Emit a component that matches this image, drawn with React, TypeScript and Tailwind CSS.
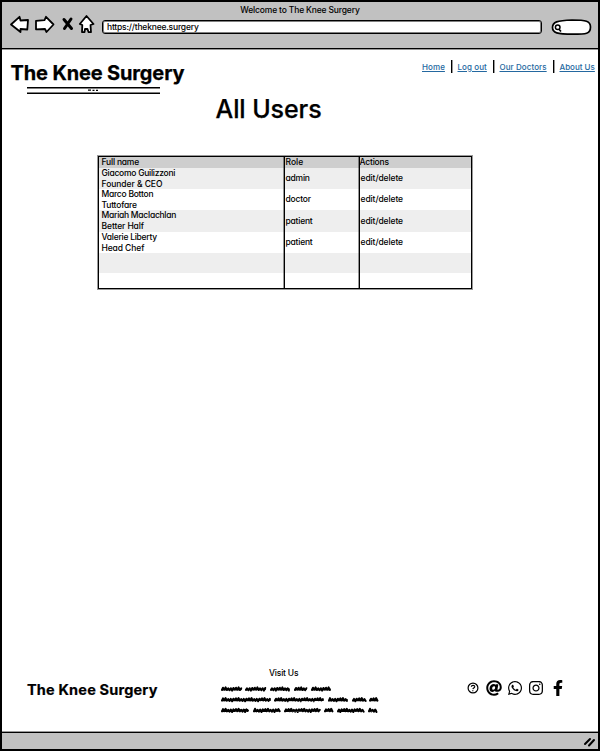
import type { ReactNode } from "react";
import { FaAt, FaFacebookF, FaInstagram, FaWhatsapp } from "react-icons/fa";

const users = [
  { name: "Giacomo Guilizzoni", title: "Founder & CEO", role: "admin", titleClass: "tracking-[-0.05px]" },
  { name: "Marco Botton", title: "Tuttofare", role: "doctor", titleClass: "tracking-[-0.2px]" },
  { name: "Mariah Maclachlan", title: "Better Half", role: "patient", titleClass: "tracking-[-0.1px]" },
  { name: "Valerie Liberty", title: "Head Chef", role: "patient", titleClass: "tracking-[-0.1px]" },
];

// Start and end of each scribbled word, per line.
const scribbles = [
  [[0, 21], [24, 45], [49, 69], [73, 86], [90, 110]],
  [[0, 50], [53, 103], [107, 127], [131, 145], [148, 157]],
  [[0, 28], [32, 59], [63, 99], [103, 112], [116, 143], [147, 156]],
];

function scribblePath(from: number, to: number, y: number) {
  let d = `M${from + 1} ${y + 1}`;
  for (let x = from + 2, i = 0; x < to; x += 1.3, i++) {
    const reach = [1.3, 0.8, 1.6, 1, 0.6][(i + from) % 5];
    d += `L${x} ${y + (i % 2 ? reach : -reach)}`;
  }
  return d + `M${from + 1} ${y + 0.5}L${to - 1} ${y + 0.2}`;
}

const colLine = "border-r border-black shadow-[inset_-1px_0_0_rgba(0,0,0,0.4)]";

function Cell({ children, className = "" }: { children?: ReactNode; className?: string }) {
  return <div className={`flex flex-col justify-center ${className}`}>{children}</div>;
}

function Separator({ className = "" }: { className?: string }) {
  return <i className={`h-full w-px bg-black shadow-[1px_0_0_rgba(0,0,0,0.4)] ${className}`} />;
}

export default function App() {
  return (
    <div className="flex h-[751px] w-[600px] flex-col overflow-hidden border-2 border-black bg-white font-['Inter','Liberation_Sans',sans-serif] text-[8.5px] font-medium leading-[11px] tracking-[-0.2px] text-black [font-feature-settings:'cv11']">
      <header className="flex h-[47px] shrink-0 flex-col border-b border-black bg-[#c1c1c1] shadow-[0_1px_0_rgba(0,0,0,0.4)]">
        <div className="mt-[3px] text-center tracking-[-0.16px]">Welcome to The Knee Surgery</div>
        <div className="-mt-px flex items-start">
          <svg className="h-[22px] w-[94px]" viewBox="2 15 94 22" fill="#fff" stroke="#000" strokeWidth="1.8" strokeLinejoin="round">
            <path d="M11 24.5 19.5 16.8 20.5 20.5 28 20 27.3 29.5 20.5 29 20.5 32Z" />
            <path d="M36 20.8 44.5 20.2 46 16.800 53.5 24.5 46.5 32 45 29 36 29.3Z" />
            <path d="M64 19.500 71.500 28.500M71 19 64.500 28.500" strokeWidth="3" strokeLinecap="round" />
            <path d="M86.5 16 93.5 24 90.5 25 91 32.2 88.5 32 87.5 29 85 29 84.5 32 82 32.2 82.3 25 79.8 24Z" />
          </svg>
          <div className="mt-[5px] ml-[6px] flex h-[14px] w-[440px] items-center rounded-[3px] border border-black bg-white pt-px pl-[4px] shadow-[inset_0_0_0_1px_rgba(0,0,0,0.5)]">
            https://theknee.surgery
          </div>
          <svg className="mt-[3px] ml-[9px] h-[18px] w-[42px]" viewBox="551 18 42 18" fill="#fff" stroke="#000" strokeWidth="1.7">
            <path d="M552.500 27.500C552.500 22 557 20.500 572 20C586 20 590.500 21 590.500 27C590.500 34 586 34.200 573 34.200C557 34 552.500 33 552.500 27.500Z" />
            <circle cx="557.700" cy="27.300" r="2.300" strokeWidth="1.500" />
            <path d="M559 29.200 561 31.500" />
          </svg>
        </div>
      </header>

      <div className="flex shrink-0 justify-between">
        <div className="mt-[14px] ml-[8.500px]">
          <h1 className="whitespace-nowrap text-[20px] font-bold leading-[20px] tracking-[-0.14px] [-webkit-text-stroke:0.25px_black]">The Knee Surgery</h1>
          <svg className="mt-[4px] ml-[16.500px] block h-[8px] w-[134px]" viewBox="0 0 134 8" stroke="#000">
            <path d="M0 .8H133M0 6.300H133" strokeWidth="1.400" />
            <path d="M61 3.200h3M65.500 3.400h2M69 3.400h2" strokeWidth="1.300" />
          </svg>
        </div>
        <nav className="mt-[11px] mr-[2px] flex h-[13px] items-center whitespace-nowrap text-[8px] tracking-[0.08px] text-[#2468a0]">
          <a className="w-[29px] pt-[2px] underline">Home</a>
          <Separator />
          <a className="w-[36px] pt-[2px] pl-[5.500px] underline">Log out</a>
          <Separator className="ml-[5px]" />
          <a className="w-[54px] pt-[2px] pl-[5.500px] underline">Our Doctors</a>
          <Separator className="ml-[5px]" />
          <a className="w-[42px] pt-[2px] pl-[5.500px] tracking-normal underline">About Us</a>
        </nav>
      </div>

      <h2 className="mt-[2px] ml-[213.500px] shrink-0 whitespace-nowrap text-[25px] leading-[25px] tracking-[-0.08px] [-webkit-text-stroke:0.25px_black]">All Users</h2>

      <div className="mt-[34px] ml-[95.500px] grid h-[133px] w-[374px] shrink-0 grid-cols-[186px_75px_1fr] grid-rows-[11px_21px_21px_22px_21px_20px_1fr] border border-black shadow-[0_0_0_1px_rgba(0,0,0,0.4)]">
        <Cell className={`bg-[#cecece] pl-[3px] ${colLine}`}>Full name</Cell>
        <Cell className={`bg-[#cecece] pl-px tracking-normal ${colLine}`}>Role</Cell>
        <Cell className="bg-[#cecece]">Actions</Cell>
        {users.map((u, i) => {
          const bg = i % 2 ? "bg-white" : "bg-[#eee]";
          return [
            <Cell key={u.name} className={`pl-[3px] ${colLine} ${bg}`}>
              <span className="tracking-[-0.26px]">{u.name}</span>
              <span className={u.titleClass}>{u.title}</span>
            </Cell>,
            <Cell key={`${u.name}-role`} className={`pl-px tracking-[-0.22px] ${colLine} ${bg}`}>{u.role}</Cell>,
            <Cell key={`${u.name}-actions`} className={`pl-px tracking-[-0.1px] ${bg}`}>edit/delete</Cell>,
          ];
        })}
        <Cell className={`bg-[#eee] ${colLine}`} />
        <Cell className={`bg-[#eee] ${colLine}`} />
        <Cell className="bg-[#eee]" />
        <Cell className={colLine} />
        <Cell className={colLine} />
        <Cell />
      </div>

      <footer className="mt-auto flex shrink-0 flex-col">
        <div className="flex h-[65px]">
          <div className="mt-[15px] ml-[25px] w-[194px] whitespace-nowrap text-[14.500px] font-bold leading-[16px] tracking-[0.18px] [-webkit-text-stroke:0.2px_black]">The Knee Surgery</div>
          <div className="w-[200px]">
            <div className="mt-px ml-[48px]">Visit Us</div>
            <svg className="mt-[4px] block h-[32px] w-[160px]" viewBox="0 0 160 32" fill="none" stroke="#000" strokeWidth="2" strokeLinejoin="round" strokeLinecap="round">
              {scribbles.map((line, i) => line.map(([a, b]) => <path key={`${i}-${a}`} d={scribblePath(a, b, 6 + i * 10.7)} />))}
            </svg>
          </div>
          <div className="mt-[13px] ml-[46px] flex h-[16px] items-center">
            <svg className="size-[12px]" viewBox="0 0 12 12" fill="none" stroke="#000" strokeWidth="1.200">
              <circle cx="6" cy="6" r="4.900" />
              <path d="M4.300 4.700C4.500 3 7.900 3 7.700 4.900C7.500 6 6 5.900 5.900 7.100M5.800 8.200v1" />
            </svg>
            <FaAt className="ml-[7px] size-[16px]" />
            <FaWhatsapp className="ml-[5px] size-[16px]" />
            <FaInstagram className="ml-[5px] size-[16px]" />
            <FaFacebookF className="ml-[6px] size-[16px]" />
          </div>
        </div>
        <div className="flex h-[17px] justify-end border-t border-black bg-[#c1c1c1] shadow-[0_-1px_0_rgba(0,0,0,0.4)]">
          <svg className="mt-[3px] mr-[2px] h-[12px] w-[13px]" viewBox="0 0 13 12" stroke="#000" strokeWidth="2" strokeLinecap="round">
            <path d="M2 8 7 3M6 9.500 11 4" />
          </svg>
        </div>
      </footer>
    </div>
  );
}
